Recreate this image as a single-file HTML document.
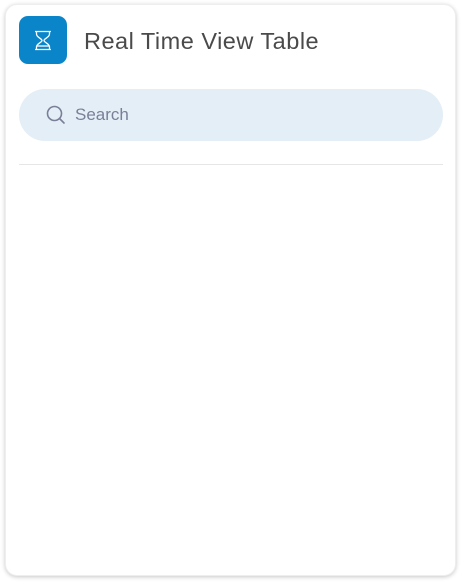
<!DOCTYPE html>
<html><head><style>
body{margin:0;width:467px;height:584px;background:#fff;font-family:"Liberation Sans",sans-serif;position:relative;overflow:hidden}
.card{position:absolute;left:5px;top:4px;width:451px;height:572px;border-radius:12px;background:#fff;box-shadow:0 1px 4px rgba(0,0,0,.22);border:1px solid #eee;box-sizing:border-box}
.icon{position:absolute;left:19px;top:16px;width:48px;height:48px;border-radius:9px;background:#0a85c9}
.title{position:absolute;left:84px;top:28px;font-size:23.5px;color:#4a4a4a;letter-spacing:.5px}
.search{position:absolute;left:19px;top:89px;width:424px;height:52px;border-radius:26px;background:#e3eef6}
.stext{position:absolute;left:75px;top:105px;font-size:17px;color:#7a7f98}
.div{position:absolute;left:19px;top:164px;width:424px;height:1px;background:#e6e6e6}
</style></head><body>
<div class="card"></div>
<div class="icon"><svg width="48" height="48" viewBox="0 0 48 48"><g fill="none" stroke="#fff" stroke-width="1.3"><path d="M16 15.5h16M16 33.5h16"/><path d="M17.5 15.5v2.5c0 3.5 5.5 4.5 5.5 6.5s-5.5 3-5.5 6.5v2.5M30.5 15.5v2.5c0 3.5-5.5 4.5-5.5 6.5s5.5 3 5.5 6.5v2.5"/><path d="M18 30h12"/></g></svg></div>
<div class="title">Real Time View Table</div>
<div class="search"></div>
<svg style="position:absolute;left:45px;top:104px" width="22" height="22" viewBox="0 0 22 22"><circle cx="9.5" cy="9.5" r="7" fill="none" stroke="#7a7f98" stroke-width="1.6"/><path d="M14.5 14.5l4.5 4.5" stroke="#7a7f98" stroke-width="1.6" stroke-linecap="round"/></svg>
<div class="stext">Search</div>
<div class="div"></div>
</body></html>
